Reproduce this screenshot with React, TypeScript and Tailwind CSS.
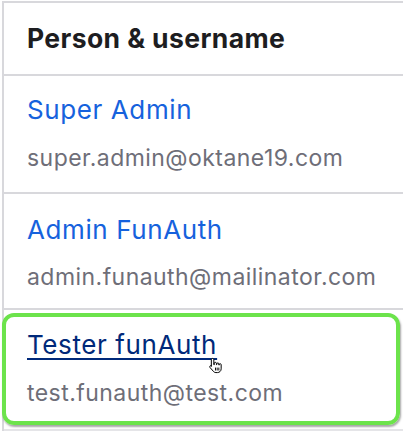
import React from "react";

const font = { fontFamily: "Inter, 'Noto Sans', sans-serif" };

function HandCursor() {
  return (
    <svg width="15" height="17" viewBox="0 0 18 20" className="absolute left-[202px] top-[40px]">
      <path
        d="M5.5 1.5c.9 0 1.5.6 1.5 1.5v6h.5V7.5c0-.8.6-1.3 1.3-1.3s1.3.5 1.3 1.3V9h.4V8.2c0-.8.6-1.3 1.3-1.3s1.3.5 1.3 1.3V9.5h.3V9c0-.7.6-1.2 1.2-1.2s1.2.5 1.2 1.2v5c0 2.6-2 4.5-4.5 4.5H9.6c-1.5 0-2.6-.7-3.4-1.8L2.4 12.4c-.5-.7-.4-1.5.2-2 .6-.4 1.4-.3 1.8.3L4 11V3c0-.9.6-1.5 1.5-1.5z"
        fill="#fff"
        stroke="#000"
        strokeWidth="1.2"
      />
      <path d="M9 12.5v3.5M11 12.5v3.5M13 12.5v3.5" stroke="#000" strokeWidth="1.1" />
    </svg>
  );
}

export default function App() {
  return (
    <div className="w-[403px] h-[437px] bg-white overflow-hidden" style={font}>
      <div className="ml-[2px] mt-[1px] border-l-2 border-t-2 border-[#d8d8dc] w-[420px]">
        <div className="h-[73px] border-b-2 border-[#d8d8dc] pl-[23px] flex items-center">
          <span className="text-[26.5px] font-bold text-[#1d1d21] tracking-[0.4px]">Person &amp; username</span>
        </div>
        <div className="h-[118px] border-b-2 border-[#d8d8dc] pl-[23px] pt-[18px]">
          <div className="text-[26px] leading-[32px] text-[#1662dd] tracking-[0.6px]">Super Admin</div>
          <div className="mt-[17px] text-[23px] leading-[30px] text-[#6e6e78] tracking-[0.45px]">super.admin@oktane19.com</div>
        </div>
        <div className="h-[116px] border-b-2 border-[#d8d8dc] pl-[23px] pt-[20px]">
          <div className="text-[26px] leading-[32px] text-[#1662dd] tracking-[0.6px]">Admin FunAuth</div>
          <div className="mt-[16px] text-[23px] leading-[30px] text-[#6e6e78] tracking-[0.45px]">admin.funauth@mailinator.com</div>
        </div>
        <div className="h-[121px] border-b-2 border-[#e5e5e8] pt-[3px]">
          <div className="relative w-[398px] h-[112px] -ml-[2px] rounded-[12px] border-4 border-[#6ce34b] shadow-[1px_2px_2px_rgba(0,0,0,0.35)] pl-[21px] pt-[12px]">
            <div className="text-[26px] leading-[32px] text-[#00297a] tracking-[0.6px] underline underline-offset-[4px] decoration-2">Tester funAuth</div>
            <div className="mt-[17px] text-[23px] leading-[30px] text-[#6e6e78] tracking-[0.45px]">test.funauth@test.com</div>
            <HandCursor />
          </div>
        </div>
      </div>
    </div>
  );
}
